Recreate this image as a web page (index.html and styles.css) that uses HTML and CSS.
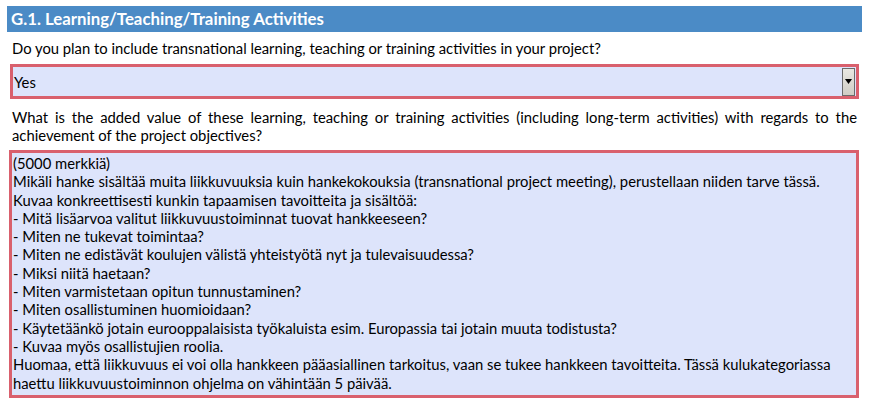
FILE: index.html
```html
<!DOCTYPE html>
<html lang="en">
<head>
<meta charset="utf-8">
<link rel="stylesheet" href="styles.css">
</head>
<body>
<div class="page">
  <div class="section-title">G.1. Learning/Teaching/Training Activities</div>
  <p class="question q1">Do you plan to include transnational learning, teaching or training activities in your project?</p>
  <div class="select">
    <span class="select-value">Yes</span>
    <span class="select-btn"><svg width="7" height="5" viewBox="0 0 7 5"><path d="M0 0H7L3.5 5Z" fill="#000"/></svg></span>
  </div>
  <p class="question q2">What is the added value of these learning, teaching or training activities (including long-term activities) with regards to the achievement of the project objectives?</p>
  <div class="textarea">
    <div>(5000 merkkiä)</div>
    <div>Mikäli hanke sisältää muita liikkuvuuksia kuin hankekokouksia (transnational project meeting), perustellaan niiden tarve tässä.</div>
    <div>Kuvaa konkreettisesti kunkin tapaamisen tavoitteita ja sisältöä:</div>
    <div>- Mitä lisäarvoa valitut liikkuvuustoiminnat tuovat hankkeeseen?</div>
    <div>- Miten ne tukevat toimintaa?</div>
    <div>- Miten ne edistävät koulujen välistä yhteistyötä nyt ja tulevaisuudessa?</div>
    <div>- Miksi niitä haetaan?</div>
    <div>- Miten varmistetaan opitun tunnustaminen?</div>
    <div>- Miten osallistuminen huomioidaan?</div>
    <div>- Käytetäänkö jotain eurooppalaisista työkaluista esim. Europassia tai jotain muuta todistusta?</div>
    <div>- Kuvaa myös osallistujien roolia.</div>
    <div>Huomaa, että liikkuvuus ei voi olla hankkeen pääasiallinen tarkoitus, vaan se tukee hankkeen tavoitteita. Tässä kulukategoriassa haettu liikkuvuustoiminnon ohjelma on vähintään 5 päivää.</div>
  </div>
</div>
</body>
</html>
```
FILE: styles.css
```css
html, body {
  margin: 0;
  padding: 0;
  background: #ffffff;
}
body {
  font-family: Lato, "Open Sans", sans-serif;
  font-size: 14.8px;
  color: #000;
}
.page {
  width: 855px;
  padding: 6px 0 0 7px;
}
.section-title {
  height: 26px;
  line-height: 26px;
  background: #4b8bc6;
  color: #fff;
  font-weight: bold;
  font-size: 16.8px;
  padding-left: 4px;
}
.question {
  margin: 0;
  line-height: 18px;
  padding-left: 5px;
}
.q1 {
  margin-top: 7px;
}
.q2 {
  margin-top: 9px;
  text-align: justify;
  width: 845px;
}
.select {
  margin: 7px 0 0 3px;
  width: 843px;
  height: 29px;
  border: 3px solid #d9606d;
  background: #dde4fb;
  display: flex;
  align-items: center;
  justify-content: space-between;
}
.select-value {
  padding-left: 1px;
}
.select-btn {
  width: 11px;
  height: 26px;
  margin-right: 1px;
  border: 1px solid #6b6b6b;
  background: linear-gradient(#e9e8e2, #cfcdc5);
  display: flex;
  align-items: center;
  justify-content: center;
}
.textarea {
  margin: 6px 0 0 2px;
  width: 843px;
  height: 241px;
  border: 3px solid #d9606d;
  background: #dde4fb;
  padding: 1px 0 0 1px;
  line-height: 18.3px;
  box-sizing: content-box;
}
.textarea div {
  width: 822px;
}
```
